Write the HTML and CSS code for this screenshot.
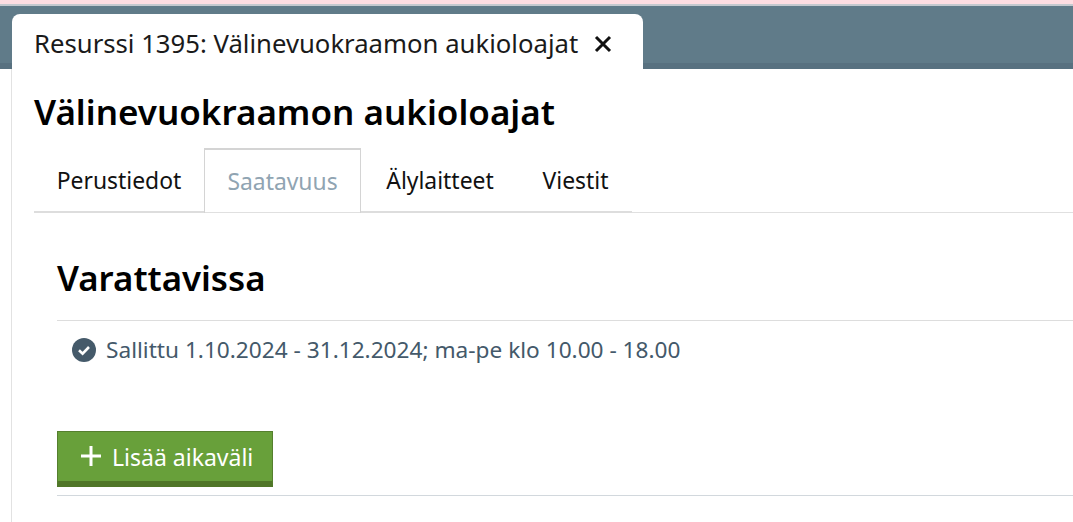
FILE: index.html
```html
<!DOCTYPE html>
<html lang="fi">
<head>
<meta charset="utf-8">
<title>Resurssi 1395</title>
<link rel="stylesheet" href="styles.css">
</head>
<body>
<div class="strip"></div>
<header class="tabbar">
  <div class="doc-tab">
    <span class="doc-tab-title">Resurssi 1395: Välinevuokraamon aukioloajat</span>
    <svg class="close" width="18" height="18" viewBox="0 0 18 18"><path d="M2 2 L16 16 M16 2 L2 16" stroke="#111" stroke-width="3" fill="none"/></svg>
  </div>
</header>
<main class="panel">
  <h1 class="title">Välinevuokraamon aukioloajat</h1>
  <nav class="tabs">
    <a class="tab tab-basic">Perustiedot</a>
    <a class="tab tab-avail active">Saatavuus</a>
    <a class="tab tab-smart">Älylaitteet</a>
    <a class="tab tab-msg">Viestit</a>
  </nav>
  <section class="content">
    <h2 class="heading">Varattavissa</h2>
    <ul class="rules">
      <li class="rule">
        <svg class="check" width="24" height="24" viewBox="0 0 24 24"><circle cx="12" cy="12" r="12" fill="#455a6a"/><path d="M7 12.2 L10.6 15.6 L17 9" stroke="#fff" stroke-width="2.6" fill="none"/></svg>
        <span>Sallittu 1.10.2024 - 31.12.2024; ma-pe klo 10.00 - 18.00</span>
      </li>
    </ul>
    <div class="actions">
      <button class="add">
        <svg class="plus" width="22" height="22" viewBox="0 0 22 22"><path d="M11 1 V21 M1 11 H21" stroke="#fff" stroke-width="3" fill="none"/></svg>
        <span class="add-label">Lisää aikaväli</span>
      </button>
    </div>
  </section>
</main>
</body>
</html>
```
FILE: styles.css
```css
html, body { margin: 0; padding: 0; background: #fff; overflow: hidden; height: 522px; }
body { font-family: "Noto Sans", sans-serif; color: #111; }
.strip { height: 4px; background: #fddde2; border-bottom: 2px solid #c4c9cf; }
.tabbar { height: 63px; background: #607b89; padding: 8px 0 0 12px; box-sizing: border-box; display: flex; align-items: flex-start; box-shadow: inset 0 -6px 0 #587180; }
.doc-tab { width: 631px; height: 63px; box-sizing: border-box; background: #fff; border-radius: 8px 8px 0 0; display: flex; align-items: center; padding: 0 0 4px 22px; gap: 16px; position: relative; z-index: 1; }
.doc-tab-title { font-size: 25.7px; white-space: nowrap; color: #1a1a1a; }
.panel { margin-left: 11px; border-left: 1px solid #e2e2e2; height: 453px; padding: 0 0 0 22px; }
.title { margin: 0; padding-top: 20px; font-size: 35px; line-height: 46px; font-weight: 600; color: #000; }
.tabs { display: flex; margin-top: 13px; height: 65px; box-sizing: border-box; border-bottom: 1px solid #e0e0e0; }
.tab { height: 65px; box-sizing: border-box; font-size: 22.9px; display: flex; align-items: center; justify-content: center; padding-top: 2px; border-bottom: 2px solid #ddd; color: #111; }
.tab-basic { width: 170px; }
.tab-avail { width: 157px; }
.tab-smart { width: 158px; }
.tab-msg { width: 113px; }
.tab.active { color: #90a4b2; border: 1px solid #d4d4d4; border-top-width: 2px; border-bottom: 0; padding-top: 0; }
.content { padding: 0 0 0 23px; }
.heading { margin: 0; padding-top: 42px; font-size: 34.8px; line-height: 46px; font-weight: 600; color: #000; }
.rules { list-style: none; margin: 19px 0 0; padding: 0 0 0 15px; border-top: 1px solid #ddd; height: 110px; }
.rule { display: flex; align-items: center; gap: 10px; padding-top: 13px; font-size: 22.65px; line-height: 32px; color: #44596a; }
.actions { border-bottom: 1px solid #d2d8dd; padding-bottom: 8px; }
.add { display: flex; align-items: center; gap: 10px; width: 216px; height: 56px; box-sizing: border-box; padding: 0 0 2px 22px; background: #68a03a; color: #fff; border: 1px solid #557f2e; border-bottom: 6px solid #507628; font: 400 23px "Noto Sans", sans-serif; }
.add-label { padding-top: 2px; }
```
